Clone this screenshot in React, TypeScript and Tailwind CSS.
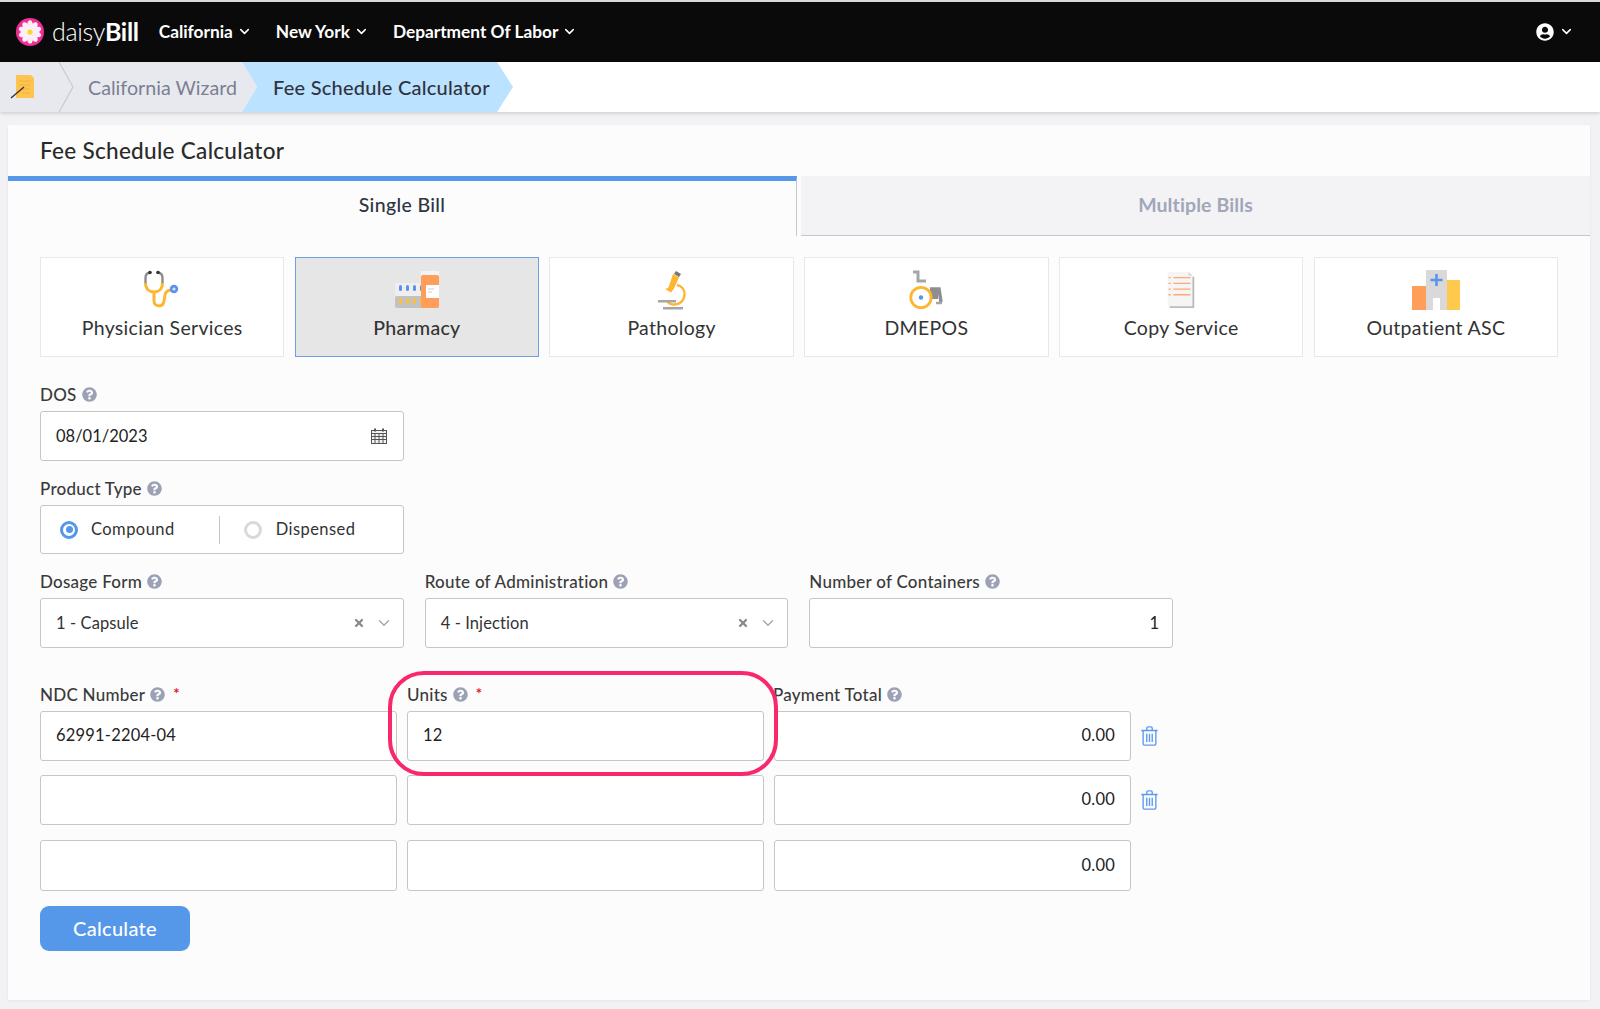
import React from "react";
import { ChevronDown, X } from "lucide-react";
import { FaQuestionCircle, FaUserCircle } from "react-icons/fa";

const font = "[font-family:Lato,'Open_Sans',sans-serif]";

function Help() {
  return <FaQuestionCircle className="ml-[5px] inline h-[15px] w-[15px] text-[#9da1b5]" />;
}

function Label({ text, required }: { text: string; required?: boolean }) {
  return (
    <div className="flex h-[20px] items-center pb-[1px] text-[17px] font-medium leading-none tracking-[0.25px] text-[#3a3a3a]">
      {text}
      <Help />
      {required && <span className="ml-[8px] -mt-[3px] text-[15px] font-bold text-[#e0202f]">*</span>}
    </div>
  );
}

function Field({ value, right, className }: { value?: string; right?: boolean; className?: string }) {
  return (
    <div
      className={`flex items-center rounded-[3px] border border-[#c6c6c6] bg-white px-[15px] pb-[1px] text-[16.5px] tracking-[0.2px] text-[#222] ${
        right ? "justify-end" : ""
      } ${className ?? "h-[50px]"}`}
    >
      {value}
    </div>
  );
}

function Select({ value }: { value: string }) {
  return (
    <div className="flex h-[50px] items-center rounded-[3px] border border-[#c6c6c6] bg-white pl-[15px] pr-[10px] text-[16.5px] tracking-[0.1px] text-[#333]">
      <span className="flex-1">{value}</span>
      <X className="mr-[10px] h-[12px] w-[12px] text-[#8a8a8a]" strokeWidth={4.500} />
      <ChevronDown className="h-[18px] w-[18px] text-[#a5a5a5]" strokeWidth={1.800} />
    </div>
  );
}

function Trash() {
  return (
    <svg viewBox="0 0 20 22" className="ml-[9px] h-[20px] w-[19px]" fill="none" stroke="#5b9bec" strokeWidth="1.5">
      <path d="M1 5h18M7 5V2.500A1.500 1.500 0 0 1 8.500 1h3A1.500 1.500 0 0 1 13 2.500V5" />
      <path d="M3 5v14.500A1.500 1.500 0 0 0 4.500 21h11a1.500 1.500 0 0 0 1.500-1.500V5" />
      <path d="M7 8.500v9M10 8.500v9M13 8.500v9" />
    </svg>
  );
}

function Daisy() {
  const petals = [0, 36, 72, 108, 144, 180, 216, 252, 288, 324];
  return (
    <svg viewBox="0 0 32 32" className="h-[28px] w-[28px]">
      <circle cx="16" cy="16" r="16" fill="#ee2f97" />
      {petals.map((a) => (
        <ellipse key={a} cx="16" cy="8.500" rx="3.400" ry="5.800" fill="#fdeef6" transform={`rotate(${a} 16 16)`} />
      ))}
      <circle cx="16" cy="16" r="3" fill="#f8d72c" />
    </svg>
  );
}

function Stethoscope() {
  return (
    <svg viewBox="0 0 38 40" className="h-[40px] w-[38px]" fill="none">
      <path d="M7 2.500C3.500 3 2.500 5 2.500 8v5" stroke="#8d8d8d" strokeWidth="2.400" />
      <path d="M15 2.500c3.500.5 4.500 2.500 4.500 5.500v5" stroke="#8d8d8d" strokeWidth="2.400" />
      <circle cx="7" cy="2.500" r="1.800" fill="#333" />
      <circle cx="15" cy="2.500" r="1.800" fill="#333" />
      <path d="M2.500 13c0 6 4 9 8.500 9s8.500-3 8.500-9" stroke="#fdb62f" strokeWidth="3" />
      <path d="M11 22v9c0 6 9 7 10 0l1-6c.5-3 3-5 7-5" stroke="#fdb62f" strokeWidth="3" />
      <circle cx="31" cy="19" r="4.200" fill="#5b93e8" />
      <circle cx="31" cy="19" r="1.600" fill="#cfe0fb" />
    </svg>
  );
}

function Pills() {
  return (
    <svg viewBox="0 0 44 38" className="h-[38px] w-[44px]">
      <rect x="0" y="12" width="30" height="13" rx="2" fill="#efefef" />
      <rect x="0" y="25" width="30" height="12" rx="2" fill="#c2c2c2" />
      {[4, 11, 18, 25].map((x) => (
        <React.Fragment key={x}>
          <rect x={x} y="14" width="3" height="6" rx="1.500" fill="#5b93e8" />
          <rect x={x} y="27" width="3" height="6" rx="1.500" fill="#fdc03e" />
        </React.Fragment>
      ))}
      <rect x="26" y="0" width="18" height="5" fill="#f4f4f4" />
      <rect x="26" y="4" width="18" height="33" rx="2" fill="#ff9e58" />
      <rect x="31" y="14" width="13" height="13" fill="#fff" />
      <path d="M33 18h6M33 21h4" stroke="#ccc" strokeWidth="1" />
    </svg>
  );
}

function Microscope() {
  return (
    <svg viewBox="0 0 30 40" className="h-[40px] w-[30px]" fill="none">
      <path d="M19 1l5 3-2 3-5-3z" fill="#777" />
      <path d="M16 4l6 3.500-5 11-3 4-6-3.500 3-1 1-2z" fill="#fdb62f" />
      <path d="M20 15c5 1 8 5 7.500 10-.5 6-5 9.500-10 9.500-4 0-6-1-7-3" stroke="#fdb62f" strokeWidth="2.400" />
      <rect x="1" y="30" width="18" height="2.500" fill="#a5a5a5" />
      <rect x="6" y="37" width="20" height="2.500" fill="#a5a5a5" />
    </svg>
  );
}

function Wheelchair() {
  return (
    <svg viewBox="0 0 36 40" className="h-[40px] w-[36px]" fill="none">
      <path d="M5 2h5v9h8" stroke="#a5a5a5" strokeWidth="3" />
      <path d="M22 19h9l2 13" stroke="#8e8e8e" strokeWidth="3.500" />
      <rect x="22" y="20" width="8" height="9" fill="#8e8e8e" />
      <path d="M28 33h6" stroke="#a5a5a5" strokeWidth="2.500" />
      <circle cx="13" cy="27.500" r="10.200" fill="#fff" stroke="#fdb62f" strokeWidth="2.800" />
      <circle cx="13" cy="27.500" r="2.200" fill="#5b93e8" />
    </svg>
  );
}

function Doc() {
  return (
    <svg viewBox="0 0 30 40" className="h-[38px] w-[30px]" fill="none">
      <path d="M3 6h26v33H3z" fill="#bdbdbd" />
      <path d="M1 1h22l4 4v32H1z" fill="#f5f5f5" />
      <path d="M23 1v4h4z" fill="#d5d5d5" />
      <path d="M7 7h18M7 13h18M7 19h18M7 25h18" stroke="#ffa877" strokeWidth="1.400" />
      <path d="M2 7h2M2 13h2M2 19h2M2 25h2" stroke="#ff9e58" strokeWidth="1.400" />
    </svg>
  );
}

function Hospital() {
  return (
    <svg viewBox="0 0 48 40" className="h-[40px] w-[48px]">
      <rect x="0" y="16" width="14" height="24" fill="#ff9e58" />
      <rect x="35" y="10" width="13" height="30" fill="#ffc94d" />
      <rect x="14" y="0" width="21" height="40" fill="#d9d9d9" />
      <rect x="21" y="28" width="7" height="12" fill="#fff" />
      <path d="M24.500 4v12M18.500 10h12" stroke="#5b93e8" strokeWidth="2.600" />
    </svg>
  );
}

const services = [
  { name: "Physician Services", icon: <Stethoscope /> },
  { name: "Pharmacy", icon: <Pills />, active: true },
  { name: "Pathology", icon: <Microscope /> },
  { name: "DMEPOS", icon: <Wheelchair /> },
  { name: "Copy Service", icon: <Doc /> },
  { name: "Outpatient ASC", icon: <Hospital /> },
];

export default function App() {
  return (
    <div className={`flex h-[1009px] flex-col overflow-hidden bg-[#f2f2f4] ${font}`}>
      <div className="h-[2px] bg-[#d9d9d9]" />
      <header className="flex h-[60px] items-center bg-[#0a0a0a] pb-[1px] pl-[16px] pr-[26px] text-white">
        <Daisy />
        <div className="ml-[8px] text-[25px] font-light tracking-[-0.3px]">
          daisy<span className="font-bold">Bill</span>
        </div>
        <nav className="ml-[20px] flex gap-[24px] text-[17.300px] font-bold">
          {["California", "New York", "Department Of Labor"].map((t) => (
            <span key={t} className="flex items-center gap-[4px]">
              {t}
              <ChevronDown className="h-[15px] w-[15px]" strokeWidth={2.500} />
            </span>
          ))}
        </nav>
        <div className="ml-auto flex items-center gap-[5px]">
          <FaUserCircle className="h-[18px] w-[18px]" />
          <ChevronDown className="h-[15px] w-[15px]" strokeWidth={2.500} />
        </div>
      </header>

      <div className="flex h-[50px] bg-white text-[20px] shadow-[0_1px_4px_rgba(0,0,0,0.18)]">
        <div className="relative flex w-[257px] items-center bg-[#e8e9ee] [clip-path:polygon(0_0,242px_0,257px_50%,242px_100%,0_100%)]">
          <svg viewBox="0 0 28 26" className="ml-[10px] h-[26px] w-[28px]">
            <path d="M6 1h15l3 3v20H6z" fill="#fdc44f" />
            <path d="M9 7h11M9 11h11M12 15h8M12 19h8" stroke="#f2ad2c" strokeWidth="0.800" />
            <path d="M1 24L14 13" stroke="#333" strokeWidth="1.400" />
          </svg>
          <svg viewBox="0 0 16 50" className="ml-[20px] h-[50px] w-[16px]" fill="none" stroke="#c9cad0" strokeWidth="1.200">
            <path d="M1 0l14 25L1 50" />
          </svg>
          <span className="ml-[14px] pt-[1px] text-[19.700px] text-[#7b7f92]">California Wizard</span>
        </div>
        <div className="-ml-[15px] flex w-[271px] items-center bg-[#bbe2fe] pl-[31px] font-medium tracking-[0.25px] text-[#2f3342] [clip-path:polygon(0_0,255px_0,271px_50%,255px_100%,0_100%,15px_50%)]">
          Fee Schedule Calculator
        </div>
      </div>

      <main className="mb-[9px] ml-[8px] mr-[10px] mt-[13px] flex flex-1 flex-col bg-[#fcfcfc] shadow-[0_1px_3px_rgba(0,0,0,0.06)]">
        <h1 className="flex h-[51px] items-center pl-[32px] text-[22.500px] font-medium tracking-[0.3px] text-[#2a2a2a]">
          Fee Schedule Calculator
        </h1>
        <div className="flex h-[60px]">
          <div className="flex w-[789px] items-center justify-center border-r border-t-[5px] border-r-[#c5c6d0] border-t-[#5597e8] pb-[8px] text-[19.500px] font-medium tracking-[0.35px] text-[#2f3342]">
            Single Bill
          </div>
          <div className="ml-[4px] flex flex-1 items-center justify-center border-b border-[#c5c6d0] bg-[#f3f3f6] pb-[2px] text-[19.500px] font-bold tracking-[0.1px] text-[#a2a6b8]">
            Multiple Bills
          </div>
        </div>

        <div className="relative px-[32px] pt-[21px]">
          <div className="grid w-[1518px] grid-cols-6 gap-[10.400px]">
            {services.map((s) => (
              <div
                key={s.name}
                className={`flex h-[100px] flex-col items-center border pt-[12px] text-[19.500px] tracking-[0.3px] ${
                  s.active
                    ? "border-[#6f9fe0] bg-[#e6e6e6] font-medium text-[#333]"
                    : "border-[#e8e8e8] bg-white text-[#333]"
                }`}
              >
                <div className="flex h-[40px] items-center">{s.icon}</div>
                <div className="mt-[6px] leading-[24px]">{s.name}</div>
              </div>
            ))}
          </div>

          <div className="mt-[28px] w-[364px]">
            <Label text="DOS" />
            <div className="mt-[6px] flex h-[50px] items-center justify-between rounded-[3px] border border-[#c6c6c6] bg-white pl-[15px] pr-[16px] text-[16.500px] text-[#222]">
              08/01/2023
              <svg viewBox="0 0 16 16" className="h-[16px] w-[16px]" fill="none" stroke="#555" strokeWidth="1">
                <rect x="0.500" y="2.500" width="15" height="13" fill="#f3f3f3" />
                <path d="M.500 5.500h15M.500 8.500h15M.500 11.500h15M4 5v11M8 5v11M12 5v11" />
                <path d="M4 .500v3M12 .500v3" strokeWidth="2" />
              </svg>
            </div>
          </div>

          <div className="mt-[18px] w-[364px]">
            <Label text="Product Type" />
            <div className="mt-[6px] flex h-[49px] items-center rounded-[3px] border border-[#c6c6c6] bg-white text-[16.500px] tracking-[0.45px] text-[#333]">
              <div className="ml-[19px] flex h-[18px] w-[18px] items-center justify-center rounded-full border-[3px] border-[#5597e8]">
                <div className="h-[7px] w-[7px] rounded-full bg-[#5597e8]" />
              </div>
              <span className="ml-[13px]">Compound</span>
              <div className="ml-[44px] h-[28px] w-px bg-[#c6c6c6]" />
              <div className="ml-[24px] h-[18px] w-[18px] rounded-full border-[3px] border-[#d9d9d9]" />
              <span className="ml-[14px]">Dispensed</span>
            </div>
          </div>

          <div className="mt-[18px] grid w-[1133px] grid-cols-3 gap-[21px]">
            <div>
              <Label text="Dosage Form" />
              <div className="mt-[6px]">
                <Select value="1 - Capsule" />
              </div>
            </div>
            <div>
              <Label text="Route of Administration" />
              <div className="mt-[6px]">
                <Select value="4 - Injection" />
              </div>
            </div>
            <div>
              <Label text="Number of Containers" />
              <div className="mt-[6px] flex h-[50px] items-center justify-end rounded-[3px] border border-[#c6c6c6] bg-white pr-[13px] text-[16.500px] text-[#222]">
                1
              </div>
            </div>
          </div>

          <div className="mt-[37px] grid w-[1091px] grid-cols-3 gap-x-[10px]">
            <Label text="NDC Number" required />
            <Label text="Units" required />
            <div className="-ml-px">
              <Label text="Payment Total" />
            </div>
          </div>
          <div className="mt-[6px] flex flex-col">
            {[
              { ndc: "62991-2204-04", units: "12", del: true, rowClass: "h-[50px]", gap: "mt-0" },
              { ndc: "", units: "", del: true, rowClass: "h-[50px]", gap: "mt-[14px]" },
              { ndc: "", units: "", del: false, rowClass: "h-[51px]", gap: "mt-[15px]" },
            ].map((r, i) => (
              <div key={i} className={`flex items-center ${r.gap}`}>
                <div className="grid w-[1091px] grid-cols-3 gap-x-[10px]">
                  <Field value={r.ndc} className={r.rowClass} />
                  <Field value={r.units} className={r.rowClass} />
                  <Field value="0.00" right className={r.rowClass} />
                </div>
                {r.del && <Trash />}
              </div>
            ))}
          </div>

          <button className="mt-[15px] h-[45px] w-[150px] rounded-[9px] bg-[#5597e8] pb-[2px] text-[20px] font-medium tracking-[0.3px] text-white">
            Calculate
          </button>

          {/* highlight drawn over the Units field */}
          <div className="pointer-events-none absolute left-[380px] top-[435px] h-[105px] w-[390px] rounded-[36px] border-[4.500px] border-[#f9286b]" />
        </div>
      </main>
    </div>
  );
}
